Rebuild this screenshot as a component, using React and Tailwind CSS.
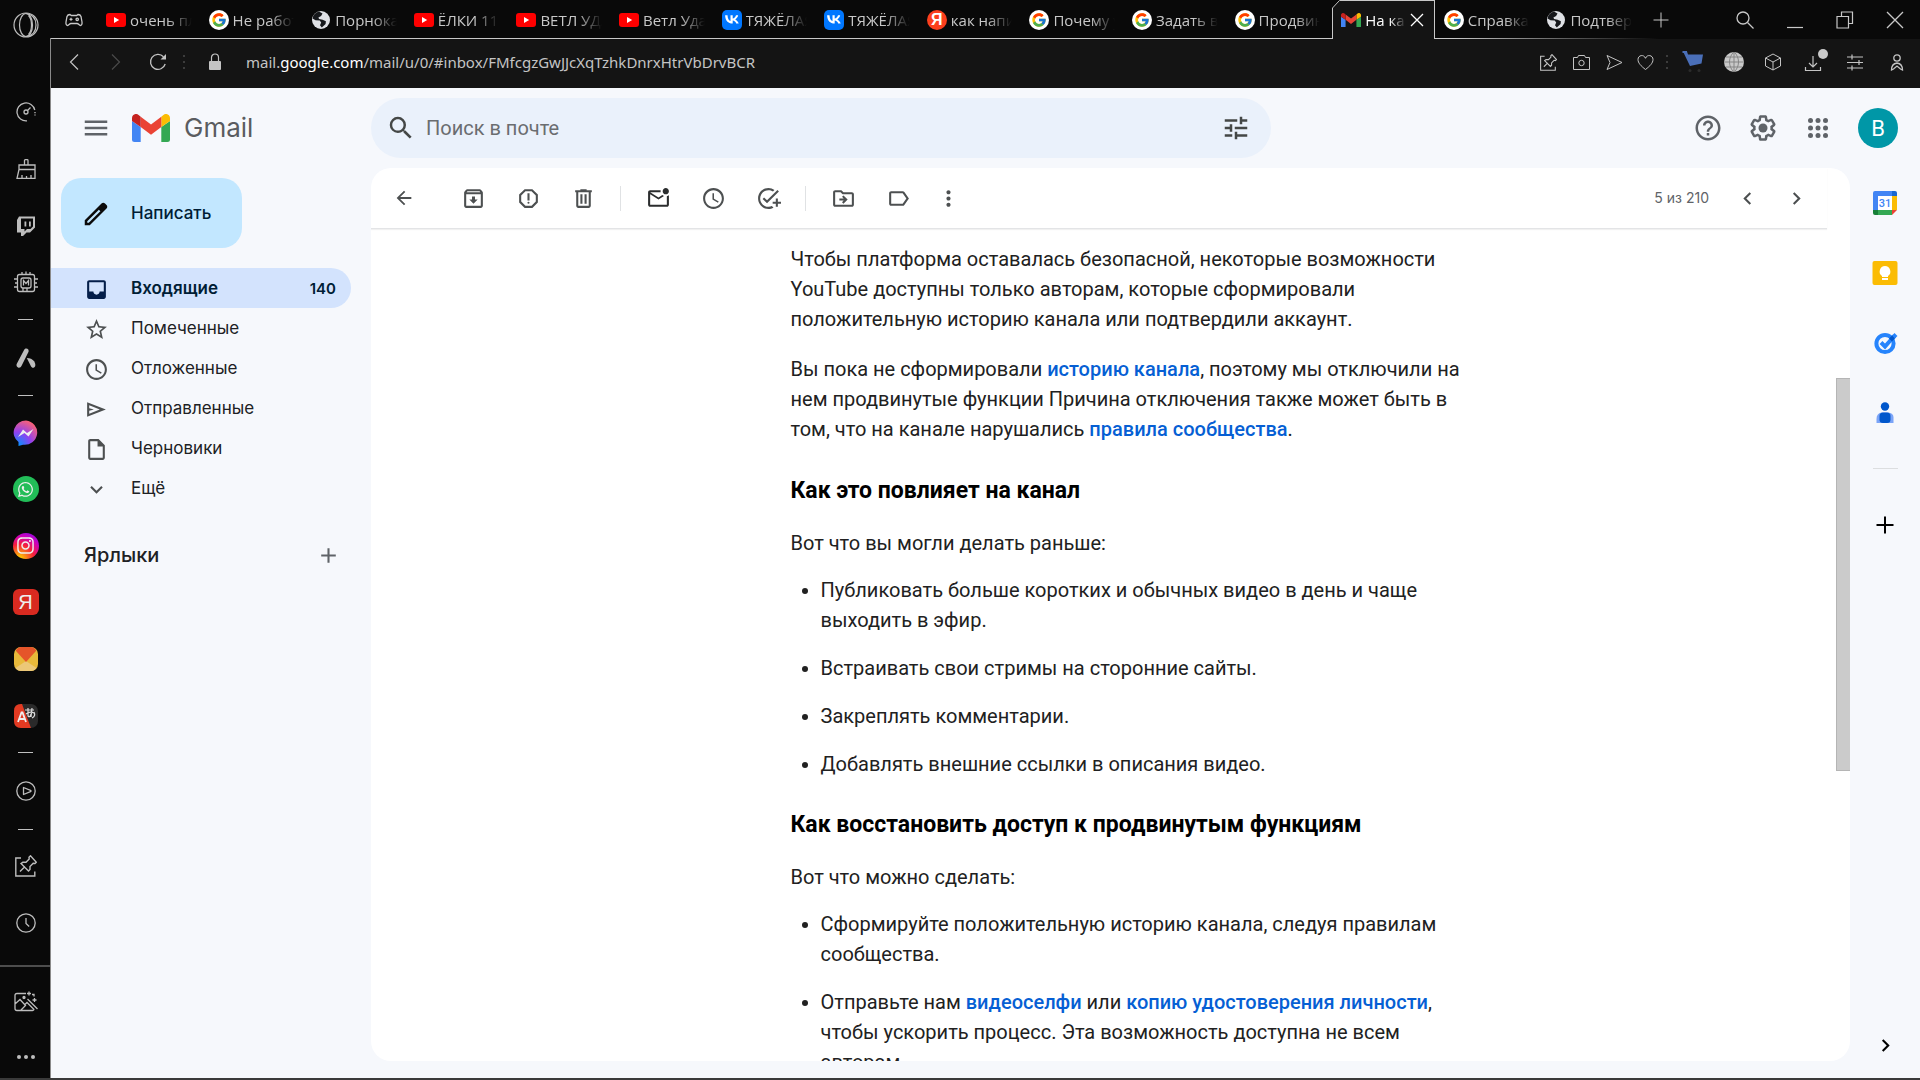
import React from "react";
import { FcGoogle } from "react-icons/fc";
import { FaWhatsapp, FaInstagram } from "react-icons/fa";
import {
  MdMenu, MdSearch, MdTune, MdHelpOutline, MdArrowBack, MdOutlineArchive,
  MdOutlineReport, MdOutlineMarkEmailUnread, MdAccessTime, MdOutlineAddTask,
  MdOutlineDriveFileMove, MdLabelOutline, MdMoreVert, MdChevronLeft, MdChevronRight,
  MdStarBorder, MdOutlineInsertDriveFile, MdExpandMore, MdAdd,
} from "react-icons/md";

/* ---------- thin line icons of the browser frame ---------- */

function Line({ size = 20, box = 20, width = 1, className = "", children }) {
  return (
    <svg width={size} height={size} viewBox={`0 0 ${box} ${box}`} fill="none" stroke="currentColor"
      strokeWidth={width} className={`shrink-0 ${className}`} aria-hidden="true">
      {children}
    </svg>
  );
}

const OperaIcon = () => (
  <Line size={26} box={26} width={1.2}>
    <circle cx="13" cy="13" r="12" />
    <ellipse cx="13" cy="13" rx="6.5" ry="11.5" />
    <path d="M13 1.500c7 1 10 5.500 10 11.500s-3 10.500-10 11.500M15.500 3.500c4 4 4 15 0 19" />
  </Line>
);
const GamepadIcon = () => (
  <Line size={18} box={18} width={1.3}>
    <path d="M5 3.500 6.300 4.500h5.400L13 3.500c1.500 0 2.500.5 3 2l1 5.500c.3 2-.4 3.500-1.600 3.500-1.300 0-1.800-2-3.400-2H6c-1.600 0-2.100 2-3.400 2C1.400 14.500.7 13 1 11l1-5.500c.5-1.500 1.500-2 3-2z" />
    <path d="M6 6.800v3M4.500 8.300h3" />
    <circle cx="12.200" cy="8.300" r="1.200" />
  </Line>
);
const GaugeIcon = () => (
  <Line width={1.3}>
    <path d="M11 18.900A9 9 0 1 1 18.800 8" />
    <path d="M19 10v4" strokeDasharray="1.200 1.200" />
    <circle cx="10" cy="10" r="2" />
    <path d="m11.500 8.500 3-3" />
  </Line>
);
const BrushIcon = () => (
  <Line width={1.3}>
    <path d="M8.500 6V1.500q0-.8.800-.8h1.900q.8 0 .8.800V6M3 10.500V6h16v4.500M3 10.500h16M3 10.500 1 19.400h18V10.500M6 19v-3M10.500 19v-2M15 19v-3" />
  </Line>
);
const TwitchIcon = () => (
  <svg width="20" height="20" viewBox="0 0 20 20" fill="currentColor" aria-hidden="true">
    <path fillRule="evenodd" d="M3 .5h16v11L14 16.500h-3.500L7 20H5v-3.500H1V4zM5 2.500v10.500h3.500v2.500l2.500-2.500h3.500l2.500-2.500v-8zM8.500 5.500h1.800v5H8.500zM13 5.500h1.800v5H13z" />
  </svg>
);
const ChipIcon = () => (
  <Line size={24} box={24} width={1.3}>
    <rect x="3.500" y="3.500" width="17" height="17" rx="2" />
    <rect x="7" y="7" width="10" height="10" rx="2" />
    <path d="M9.500 14.500v-5l2.500 3 2.500-3v5M8 3V1M12 3V.5M16 3V1M9 17v3M13 17v3M0 8h3M1 12h2M0 16h3M21 8h3M21 12h2M21 16h3" />
  </Line>
);
const AvastIcon = () => (
  <svg width="20" height="20" viewBox="0 0 20 20" fill="currentColor" aria-hidden="true">
    <path d="M8.200 1.700C9 .1 11.400 0 12.300 1.600c.5 1 .4 1.800 0 2.700L5.600 17.800C4.900 19.300 3.600 20.200 2.100 19.600.6 18.900.1 17.300.8 15.700z" />
    <path d="M10.800 10c3 .2 5.700 1 7.500 3.400 1.400 2 1.500 5.300-.3 6.200-1.500.6-2.500-.4-3.200-1.600z" />
  </svg>
);
const PlayIcon = () => (
  <Line width={1.300}>
    <circle cx="10" cy="10" r="9.200" />
    <path d="M7.500 6.500v7l7-2.800q1-.7 0-1.400z" strokeLinejoin="round" />
  </Line>
);
const PinIcon = ({ size = 22 }) => (
  <Line size={size} box={22} width={1.400}>
    <path d="M6 3H.8v18h19v-4.500M5 16.500l5-5M6 8.500l7.500 7.500 1.500-1.500v-3l3.200-3.300 1.800.3 1.300-1.300L15.500.8 14 2.300l.2 1.800L11 7.300H7.800z" />
  </Line>
);
const ClockIcon = () => (
  <Line width={1.300}>
    <circle cx="10" cy="10" r="9.200" />
    <path d="M10 5v5.500l3.200 3" />
  </Line>
);
const MagicImageIcon = () => (
  <Line size={24} box={24} width={1.300}>
    <path d="M12 3.500H3Q1 3.500 1 5.500v13q0 2 2 2h15.500q1.500 0 1.500-1.500M1 14l5-4.500 5.500 6L7 20M10.500 15l2.500-2.500 7 7M13.500 9l10 10M15 1.500v4M13 3.500h4M20.500 8v4M18.500 10h4M18 4.500h2v2" />
    <circle cx="10" cy="7.500" r="1" fill="currentColor" />
  </Line>
);

/* ---------- small brand marks ---------- */

const YoutubeMark = () => (
  <svg width="20" height="20" viewBox="0 0 20 20" aria-hidden="true" className="shrink-0">
    <rect y="3" width="20" height="14" rx="3" fill="#f00" />
    <path d="M8 7v6l5.200-3z" fill="#fff" />
  </svg>
);
const GoogleMark = () => (
  <span className="flex size-5 shrink-0 items-center justify-center rounded-full bg-white"><FcGoogle size={16} /></span>
);
const GlobeMark = () => (
  <svg width="20" height="20" viewBox="0 0 20 20" aria-hidden="true" className="shrink-0">
    <circle cx="10" cy="10" r="9" fill="#dfe1e5" />
    <path d="M8 1.500C4.500 2.500 2 5 1.600 8.500l2.900 1.800 4.200.3 1.500 2-1.200 2.600 1.800 2.300 3.800-3.600.3-2.700-3.300-1.500-3.500-.6-.7-1.700 2.700-1.300 1.400-2.600z" fill="#16181b" />
  </svg>
);
const VkMark = () => (
  <span className="flex size-5 shrink-0 items-center justify-center overflow-hidden rounded-[5px] bg-[#0077ff] text-white">
    <svg width="14" height="9" viewBox="0 0 14 9" aria-hidden="true">
      <path fill="currentColor" d="M7.700 8.600C3 8.600.2 5.400.1.200h2.400c.1 3.800 1.700 5.400 3 5.700V.2h2.200v3.300C9.100 3.300 10.500 1.800 11 .2h2.200c-.4 2-1.900 3.500-3 4.200 1.100.5 2.800 1.800 3.500 4.200h-2.500c-.5-1.600-1.800-2.900-3.500-3v3z" />
    </svg>
  </span>
);
const YandexMark = () => (
  <span className="flex size-5 shrink-0 items-center justify-center rounded-full bg-[#fc3f1d] font-['Liberation_Sans',sans-serif] text-base leading-5 font-bold text-white">Я</span>
);
const GmailMark = ({ className }) => (
  <svg viewBox="0 0 38 28" className={`shrink-0 ${className}`} aria-hidden="true">
    <path d="M0 7v18.500Q0 28 2.600 28H8.700V13z" fill="#4285f4" />
    <path d="M29.300 13v15h6.100Q38 28 38 25.500V7z" fill="#34a853" />
    <path d="M29.300 2.800V13L38 7V4c0-3.500-4-5.300-6.600-3z" fill="#fbbc04" />
    <path d="M8.700 13V2.800L19 10.500l10.300-7.700V13L19 20.700z" fill="#ea4335" />
    <path d="M0 4v3l8.700 6V2.800L6.600 1C4-1.300 0 .5 0 4z" fill="#c5221f" />
  </svg>
);

const tabs = [
  { icon: YoutubeMark, text: "очень пл" },
  { icon: GoogleMark, text: "Не работ" },
  { icon: GlobeMark, text: "Порнока" },
  { icon: YoutubeMark, text: "ЁЛКИ 11" },
  { icon: YoutubeMark, text: "ВЕТЛ УДА" },
  { icon: YoutubeMark, text: "Ветл Уда" },
  { icon: VkMark, text: "ТЯЖЁЛАЯ" },
  { icon: VkMark, text: "ТЯЖЁЛАЯ" },
  { icon: YandexMark, text: "как напи" },
  { icon: GoogleMark, text: "Почему у" },
  { icon: GoogleMark, text: "Задать во" },
  { icon: GoogleMark, text: "Продвин" },
  { icon: null, text: "На ка" },
  { icon: GoogleMark, text: "Справка", last: true },
  { icon: GlobeMark, text: "Подтверж", last: true },
];

const label = "min-w-0 flex-1 overflow-hidden whitespace-nowrap text-[15px] leading-6 [mask-image:linear-gradient(to_right,black_60%,transparent)]";

function TabStrip() {
  return (
    <div className="relative flex h-[39px] shrink-0 text-[#c8c8c8]">
      <div className="absolute inset-x-0 bottom-0 h-px bg-[linear-gradient(to_right,#c8c8c8_75%,transparent_86%)]" />
      <button aria-label="GX" className="flex w-[50px] shrink-0 items-center justify-center pr-1"><GamepadIcon /></button>
      <div role="tablist" className="grid min-w-0 flex-1 grid-cols-[repeat(15,minmax(0,1fr))]">
        {tabs.map((t, i) =>
          t.icon ? (
            <button key={i} role="tab" className={`flex min-w-0 items-center gap-1 text-left ${t.last ? "pr-2 pl-[9px]" : "pr-3 pl-[5px]"}`}>
              <t.icon />
              <span className={label}>{t.text}</span>
            </button>
          ) : (
            <div key={i} role="tab" aria-selected="true" className="relative flex min-w-0 items-center gap-1 border-x border-t border-[#c8c8c8] bg-[#141414] pl-2 text-white">
              <svg width="9" height="10" className="absolute -top-px -left-px" aria-hidden="true">
                <path d="M0 0h9L0 10z" fill="#090909" />
                <path d="M.5 10V8L7.500.5H9" stroke="#c8c8c8" fill="none" />
              </svg>
              <GmailMark className="w-5" />
              <span className={label}>{t.text}</span>
              <button aria-label="Закрыть вкладку" className="mr-2.5"><Line size={14} box={14} width={1.300}><path d="m1 1 12 12M13 1 1 13" /></Line></button>
            </div>
          )
        )}
      </div>
      <div className="flex w-[280px] shrink-0 items-center justify-between pr-4 pl-[13px]">
        <button aria-label="Новая вкладка"><Line size={16} box={16}><path d="M8 .5v15M.5 8h15" /></Line></button>
        <div className="flex items-center gap-8">
          <button aria-label="Поиск"><Line size={18} box={18} width={1.300}><circle cx="7" cy="7" r="6" /><path d="m11.500 11.500 6 6" /></Line></button>
          <button aria-label="Свернуть"><Line size={18} box={18} width={1.200}><path d="M1 16.500h16" /></Line></button>
          <button aria-label="Восстановить"><Line size={18} box={18} width={1.200}><path d="M5.500 5V1h11v11.500h-4M1 5.500h11.500V17H1z" /></Line></button>
          <button aria-label="Закрыть"><Line size={18} box={18} width={1.300}><path d="m1 1 16 16M17 1 1 17" /></Line></button>
        </div>
      </div>
    </div>
  );
}

const DotColumn = () => (
  <span className="flex flex-col gap-1">
    <i className="size-0.5 bg-[#3c3c3c]" /><i className="size-0.5 bg-[#3c3c3c]" /><i className="size-0.5 bg-[#3c3c3c]" />
  </span>
);

function AddressBar() {
  return (
    <div className="flex h-[49px] shrink-0 items-center bg-[#141414] pb-[3px] text-[#c4c4c4]">
      <div className="flex w-[195px] shrink-0 items-center pl-4">
        <button aria-label="Назад" className="mr-6"><Line size={16} box={16} width={1.200}><path d="M11 .5 3.500 8l7.500 7.500" /></Line></button>
        <button aria-label="Вперёд" disabled className="mr-[26px] text-[#4a4a4a]"><Line size={16} box={16} width={1.200}><path d="M5 .5 12.500 8 5 15.500" /></Line></button>
        <button aria-label="Обновить" className="mr-4"><Line size={18} box={18} width={1.300}><path d="M14.500 3.800A7.500 7.500 0 1 0 16.200 11" /><path d="M17 1v5.500h-5.500z" fill="currentColor" stroke="none" /></Line></button>
        <DotColumn />
        <svg width="14" height="18" viewBox="0 0 14 18" className="ml-[23px]" aria-hidden="true">
          <rect x="1" y="8" width="12" height="9" rx="1" fill="currentColor" />
          <path d="M3.500 8V4.500a3.500 3.500 0 0 1 7 0V8" fill="none" stroke="currentColor" strokeWidth="1.200" />
        </svg>
      </div>
      <p className="min-w-0 flex-1 truncate font-['Noto_Sans',sans-serif] text-[15px] leading-6">
        mail.<span className="text-white">google.com</span>/mail/u/0/#inbox/FMfcgzGwJJcXqTzhkDnrxHtrVbDrvBCR
      </p>
      <div className="flex shrink-0 items-center pr-3.5">
        <button aria-label="Закрепить" className="mr-4"><PinIcon size={17} /></button>
        <button aria-label="Снимок" className="mr-4"><Line size={17} box={17}><path d="M.5 3.500h4l1-2h6l1 2h4v12H.5z" /><circle cx="8.500" cy="9" r="2.700" /></Line></button>
        <button aria-label="Мой поток" className="mr-3.5"><Line size={17} box={17}><path d="m1 1.500 15 7-15 7 3-7z" /></Line></button>
        <button aria-label="Избранное" className="mr-3"><Line size={17} box={17}><path d="M8.500 15.500C4 12 1 9 1 5.500c0-4.500 6-5.500 7.500-1.200C10 0 16 1 16 5.500c0 3.500-3 6.500-7.500 10z" /></Line></button>
        <DotColumn />
        <button aria-label="Покупки" className="mr-5 ml-3.5">
          <svg width="22" height="22" viewBox="0 0 22 22" aria-hidden="true">
            <path d="M1 .500h4l1 3h15l-1.500 9L8 15z" fill="#4a6fb8" />
            <path d="M.5 1h4.500" stroke="#4a6fb8" strokeWidth="2" />
            <circle cx="8" cy="19.500" r="1.500" fill="#2b2b2b" /><circle cx="17" cy="19.500" r="1.500" fill="#2b2b2b" />
          </svg>
        </button>
        <button aria-label="Переводчик" className="mr-5">
          <svg width="20" height="20" viewBox="0 0 20 20" aria-hidden="true">
            <circle cx="10" cy="10" r="10" fill="#c9c9c9" />
            <path d="M10 0v20M0 10h20M2 5h16M2 15h16M10 0c-6 5-6 15 0 20M10 0c6 5 6 15 0 20" stroke="#858585" fill="none" />
          </svg>
        </button>
        <button aria-label="Расширения" className="mr-[22px]"><Line size={18} box={18}><path d="m9 1 7.500 4v8L9 17l-7.500-4V5zM1.500 5 9 9l7.500-4M9 9v8" /></Line></button>
        <button aria-label="Загрузки" className="relative mr-6">
          <Line size={18} box={18} width={1.200}><path d="M9 3v11M5 10l4 4 4-4M1.500 14v3.500h15V14" /></Line>
          <span className="absolute -top-1 -right-1.5 size-2.5 rounded-full bg-[#c9c9c9]" />
        </button>
        <button aria-label="Настройка" className="mr-6"><Line size={18} box={18} width={1.200}><path d="M1 4h16M1 9.500h16M1 15h16M6 1.500v5M13 7v5M6 12.500v5" /></Line></button>
        <button aria-label="Профиль"><Line size={18} box={18} width={1.300}><circle cx="9" cy="5" r="3.200" /><path d="M3.500 17c0-4 2-6.500 5.500-7 3.500.5 5.500 3 5.500 7l-2-1L9 13l-3.500 3z" /></Line></button>
      </div>
    </div>
  );
}

const Dash = ({ pad = "pt-[7px]" }) => (
  <div className={`flex h-[18px] shrink-0 ${pad}`}><span className="block h-px w-[15px] bg-[#c0c0c0]" /></div>
);
const Slot = ({ label, height = "h-[57px]", children }) => (
  <button aria-label={label} className={`flex w-full shrink-0 items-center justify-center pl-px ${height}`}>{children}</button>
);

function BrowserSidebar() {
  return (
    <nav aria-label="Боковая панель" className="flex w-[51px] shrink-0 flex-col items-center text-[#bdbdbd]">
      <div className="flex h-[38px] w-full shrink-0 items-end justify-center"><OperaIcon /></div>
      <div className="flex min-h-0 w-full flex-1 flex-col items-center overflow-hidden border-r border-[#8a8a8a] pt-[46px]">
        <Slot label="Ускорение" height="h-14"><GaugeIcon /></Slot>
        <Slot label="Очистка"><BrushIcon /></Slot>
        <Slot label="Twitch"><TwitchIcon /></Slot>
        <Slot label="Контроль"><ChipIcon /></Slot>
        <Dash pad="pt-2" />
        <Slot label="Aria"><AvastIcon /></Slot>
        <Dash pad="pt-[9px]" />
        <Slot label="Messenger">
          <svg width="26" height="26" viewBox="0 0 26 26" aria-hidden="true">
            <defs>
              <radialGradient id="msg" cx="0.2" cy="1" r="1.100">
                <stop offset="0" stopColor="#0095ff" /><stop offset=".5" stopColor="#9040f0" /><stop offset="1" stopColor="#ff6470" />
              </radialGradient>
            </defs>
            <path d="M13 .5a12.500 12 0 1 1-3 24.200L5.500 26V22A12.500 12 0 0 1 13 .5z" fill="url(#msg)" />
            <path d="m5 17 5-7.500 4 3.500 6.500-4-5 7.500-4-3.500z" fill="#eee" />
          </svg>
        </Slot>
        <Slot label="WhatsApp" height="h-14"><span className="flex size-[26px] items-center justify-center rounded-full bg-[#22bd58] text-[#eee]"><FaWhatsapp size={17} /></span></Slot>
        <Slot label="Instagram"><span className="flex size-[26px] items-center justify-center rounded-full bg-[radial-gradient(circle_at_25%_100%,#ffc800_5%,#f5203a_45%,#d000b8_70%,#6a10ff)] text-[#eee]"><FaInstagram size={19} /></span></Slot>
        <Slot label="Яндекс" height="h-14"><span className="flex size-[26px] items-center justify-center rounded-md bg-[#d82a20] font-['Liberation_Sans',sans-serif] text-xl leading-6 text-[#eee]">Я</span></Slot>
        <Slot label="Яндекс Почта">
          <svg width="24" height="24" viewBox="0 0 24 24" aria-hidden="true">
            <rect width="24" height="24" rx="7" fill="#e8b93a" />
            <path d="M1.500 21 12 14l10.500 7q-2 3-5.500 3H7q-3.500 0-5.500-3z" fill="#ecc878" />
            <path d="M2 3Q4 0 7 0h10q3 0 5 3v1L12 15 2 4z" fill="#e5552a" />
          </svg>
        </Slot>
        <Slot label="Яндекс Переводчик">
          <svg width="24" height="24" viewBox="0 0 24 24" aria-hidden="true">
            <rect width="24" height="24" rx="7" fill="#2a2a2a" />
            <path d="M7 0h1l9 24H7q-7 0-7-7V7q0-7 7-7z" fill="#e23a22" />
            <path d="m4 18 3.500-9.500h1L12 18M5.300 15h5.500" stroke="#eee" strokeWidth="1.800" fill="none" />
            <path d="M11 6h9M14 4v8q2 2 3-2M18 4l-1 9M20 8q2 4-2 6M12 10q4-3 8-1" stroke="#ddd" strokeWidth="1.200" fill="none" />
          </svg>
        </Slot>
        <Dash pad="pt-2" />
        <Slot label="Плеер"><PlayIcon /></Slot>
        <Dash pad="pt-2.5" />
        <Slot label="Пинборды"><PinIcon /></Slot>
        <Slot label="История"><ClockIcon /></Slot>
        <div className="mt-auto flex w-full shrink-0 flex-col border-t-2 border-[#4d4d4d] pt-1.5">
          <Slot label="Обои"><MagicImageIcon /></Slot>
          <Slot label="Ещё" height="h-12 pt-1.5"><span className="flex gap-[3px]"><i className="size-1 rounded-full bg-current" /><i className="size-1 rounded-full bg-current" /><i className="size-1 rounded-full bg-current" /></span></Slot>
        </div>
      </div>
    </nav>
  );
}

/* ---------- mail ---------- */

const ui = "font-['Inter','Noto_Sans',sans-serif]";

const Glyph = ({ size = 25, className = "", children }) => (
  <svg width={size} height={size} viewBox="0 0 24 24" fill="currentColor" className={`shrink-0 ${className}`} aria-hidden="true">{children}</svg>
);
const InboxIcon = (p) => (
  <Glyph {...p}><path fillRule="evenodd" d="M5 3h14c1.100 0 2 .9 2 2v14c0 1.100-.9 2-2 2H5c-1.100 0-2-.9-2-2V5c0-1.100.9-2 2-2zm0 2v9h4c0 1.600 1.300 3 3 3s3-1.400 3-3h4V5z" /></Glyph>
);
const SendIcon = (p) => (
  <Glyph {...p}><path fillRule="evenodd" d="M3 5v14l18-7zm2 3 10.200 4L5 16v-2.800L9.500 12 5 10.800z" /></Glyph>
);
const PencilIcon = (p) => (
  <Glyph {...p}><path fillRule="evenodd" d="M20.400 4.800 19.200 3.600c-.8-.8-2-.8-2.800 0L3 17v4h4L20.400 7.600c.8-.8.8-2 0-2.800zM6.200 19H5v-1.200L14.300 8.500l1.200 1.200z" /></Glyph>
);
const TrashIcon = () => (
  <Glyph><path fillRule="evenodd" d="M15 4V3H9v1H4v2h1v13c0 1.100.9 2 2 2h10c1.100 0 2-.9 2-2V6h1V4zm2 15H7V6h10zM9 8h2v9H9zm4 0h2v9h-2z" /></Glyph>
);

const folders = [
  [MdStarBorder, "Помеченные"],
  [MdAccessTime, "Отложенные"],
  [SendIcon, "Отправленные"],
  [MdOutlineInsertDriveFile, "Черновики"],
  [MdExpandMore, "Ещё"],
];

function MailHeader() {
  return (
    <header className="flex h-20 shrink-0 items-center pr-[22px] text-[#5f6368]">
      <div className="flex w-80 shrink-0 items-center">
        <button aria-label="Главное меню" className="ml-[30px]"><MdMenu size={30} /></button>
        <a href="#inbox" className="ml-[21px] flex items-center gap-3.5">
          <GmailMark className="w-[38px]" />
          <span className="font-['Inter',sans-serif] text-[26px] leading-8 text-[#5a5c60]">Gmail</span>
        </a>
      </div>
      <form role="search" className="flex h-[60px] max-w-[900px] flex-1 items-center rounded-full bg-[#eaf1fb] pr-5 pl-[15px] text-[#444746]">
        <MdSearch size={30} className="shrink-0" />
        <input aria-label="Поиск в почте" placeholder="Поиск в почте" className="ml-2.5 min-w-0 flex-1 bg-transparent font-['Roboto',sans-serif] text-xl outline-none placeholder:text-[#6a6d70]" />
        <button type="button" aria-label="Параметры поиска"><MdTune size={30} /></button>
      </form>
      <div className="ml-auto flex shrink-0 items-center gap-[25px]">
        <button aria-label="Поддержка"><MdHelpOutline size={30} /></button>
        <button aria-label="Настройки">
          <Glyph size={30}>
            <circle cx="12" cy="12" r="3.600" />
            <path d="M13.850 22.250h-3.700c-.740 0-1.360-.540-1.450-1.270l-.270-1.890c-.270-.140-.530-.290-.790-.460l-1.800.720c-.700.260-1.470-.030-1.810-.650L2.200 15.530c-.350-.660-.200-1.440.360-1.880l1.530-1.190c-.010-.150-.020-.300-.020-.460 0-.150.010-.310.020-.460l-1.520-1.190c-.590-.450-.740-1.260-.370-1.880l1.850-3.190c.340-.620 1.110-.900 1.790-.630l1.810.730c.260-.170.520-.320.780-.460l.270-1.910c.090-.700.710-1.250 1.440-1.250h3.700c.740 0 1.360.540 1.450 1.270l.270 1.890c.270.140.530.290.790.460l1.800-.720c.710-.260 1.480.030 1.820.650l1.840 3.180c.360.660.200 1.440-.360 1.880l-1.520 1.190c.010.150.020.300.020.460s-.010.310-.020.460l1.520 1.190c.560.450.720 1.230.370 1.860l-1.860 3.220c-.340.620-1.110.900-1.800.630l-1.800-.720c-.260.170-.520.320-.780.460l-.270 1.910c-.1.680-.720 1.220-1.460 1.220zm-3.230-2h2.760l.370-2.550.530-.22c.440-.180.880-.440 1.340-.780l.450-.340 2.380.960 1.380-2.400-2.030-1.580.070-.560c.030-.260.060-.510.060-.780s-.030-.530-.060-.780l-.070-.560 2.030-1.580-1.390-2.400-2.390.960-.450-.350c-.420-.320-.870-.580-1.330-.770l-.520-.220-.370-2.550h-2.760l-.370 2.550-.530.210c-.44.190-.88.440-1.340.790l-.45.330-2.380-.95-1.390 2.390 2.030 1.580-.07.560a7 7 0 0 0-.06.790c0 .26.020.530.060.780l.07.560-2.030 1.580 1.380 2.400 2.390-.96.450.35c.43.33.86.580 1.330.77l.53.220z" />
          </Glyph>
        </button>
        <button aria-label="Приложения Google">
          <Glyph size={30}>
            {[6, 12, 18].map((y) => [6, 12, 18].map((x) => <circle key={`${x}-${y}`} cx={x} cy={y} r="2" />))}
          </Glyph>
        </button>
        <button aria-label="Аккаунт" className="flex size-10 items-center justify-center rounded-full bg-[#0097a7] font-['Roboto',sans-serif] text-[22px] text-white">B</button>
      </div>
    </header>
  );
}

function FolderPane() {
  return (
    <aside className={`w-80 shrink-0 pt-2.5 pr-5 text-[#202124] ${ui}`}>
      <button className="ml-2.5 flex h-[70px] w-[181px] items-center gap-5 rounded-[20px] bg-[#c2e7ff] pt-0.5 pl-5 text-[17px] font-medium text-[#001d35]">
        <PencilIcon size={30} className="text-[#0b0b0b]" />Написать
      </button>
      <nav aria-label="Папки" className="mt-5">
        <a href="#inbox" className="flex h-10 items-center rounded-r-full bg-[#d3e3fd] pt-0.5 pr-[15px] pl-[33px] text-[17px] font-semibold text-[#001d35]">
          <InboxIcon className="mr-[22px] text-[#041e49]" />
          <span className="flex-1">Входящие</span>
          <span className="text-[15px]">140</span>
        </a>
        {folders.map(([Icon, name]) => (
          <a key={name} href={`#${name}`} className="flex h-10 items-center pt-0.5 pl-[33px] text-[17px]">
            <Icon size={25} className="mr-[22px] text-[#4d5051]" />{name}
          </a>
        ))}
      </nav>
      <div className="mt-8 flex h-[30px] items-center justify-between pr-2.5 pl-[33px]">
        <h2 className="text-xl font-medium">Ярлыки</h2>
        <button aria-label="Создать ярлык" className="text-[#5f6368]"><MdAdd size={25} /></button>
      </div>
    </aside>
  );
}

const Tool = ({ label, children, className = "w-[55px]" }) => (
  <button aria-label={label} className={`flex h-10 shrink-0 items-center justify-center ${className}`}>{children}</button>
);
const Sep = () => <span className="mr-2.5 ml-[9px] h-[25px] w-px shrink-0 bg-[#e0e2e4]" />;

function Toolbar() {
  return (
    <div className="mr-[23px] flex h-[61px] shrink-0 items-center border-b border-[#e3e4e6] pr-1.5 pl-[5px] text-[#4d5051] shadow-[0_1px_1px_#f1f1f1]">
      <Tool label="Назад"><MdArrowBack size={22} /></Tool>
      <Tool label="Архивировать" className="ml-[15px] w-[55px]"><MdOutlineArchive size={25} /></Tool>
      <Tool label="В спам"><MdOutlineReport size={25} /></Tool>
      <Tool label="Удалить"><TrashIcon /></Tool>
      <Sep />
      <Tool label="Отметить как непрочитанное"><MdOutlineMarkEmailUnread size={25} className="text-[#2b2d2e]" /></Tool>
      <Tool label="Отложить"><MdAccessTime size={25} /></Tool>
      <Tool label="Добавить в задачи"><MdOutlineAddTask size={25} /></Tool>
      <Sep />
      <Tool label="Переместить"><MdOutlineDriveFileMove size={25} /></Tool>
      <Tool label="Ярлыки"><MdLabelOutline size={25} /></Tool>
      <Tool label="Ещё" className="mr-auto w-[45px]"><MdMoreVert size={25} /></Tool>
      <span className={`mr-3.5 text-sm text-[#5f6368] ${ui}`}>5 из 210</span>
      <Tool label="Предыдущее" className="w-[49px]"><MdChevronLeft size={25} /></Tool>
      <Tool label="Следующее" className="w-[49px]"><MdChevronRight size={25} /></Tool>
    </div>
  );
}

const L = ({ children }) => <a href="#help" className="font-medium text-[#065fd4]">{children}</a>;
const list = "mt-[17px] flex list-disc flex-col gap-[18px] pl-[30px]";
const heading = "text-[23px] leading-[30px] font-bold text-black";

function Message() {
  return (
    <div className="flex min-h-0 flex-1">
      <div className="min-w-0 flex-1 overflow-hidden pl-14">
        <article className="mx-auto max-w-[682px] pt-[15px] font-['Roboto',sans-serif] text-xl leading-[30px] text-[#212121]">
          <p>Чтобы платформа оставалась безопасной, некоторые возможности YouTube доступны только авторам, которые сформировали положительную историю канала или подтвердили аккаунт.</p>
          <p className="mt-5">Вы пока не сформировали <L>историю канала</L>, поэтому мы отключили на нем продвинутые функции Причина отключения также может быть в том, что на канале нарушались <L>правила сообщества</L>.</p>
          <h3 className={`mt-8 ${heading}`}>Как это повлияет на канал</h3>
          <p className="mt-[22px]">Вот что вы могли делать раньше:</p>
          <ul className={list}>
            <li>Публиковать больше коротких и обычных видео в день и чаще выходить в эфир.</li>
            <li>Встраивать свои стримы на сторонние сайты.</li>
            <li>Закреплять комментарии.</li>
            <li>Добавлять внешние ссылки в описания видео.</li>
          </ul>
          <h3 className={`mt-[31px] ${heading}`}>Как восстановить доступ к продвинутым функциям</h3>
          <p className="mt-[22px]">Вот что можно сделать:</p>
          <ul className={list}>
            <li>Сформируйте положительную историю канала, следуя правилам сообщества.</li>
            <li>Отправьте нам <L>видеоселфи</L> или <L>копию удостоверения личности</L>, чтобы ускорить процесс. Эта возможность доступна не всем авторам.</li>
          </ul>
        </article>
      </div>
      <div className="flex w-3.5 shrink-0 flex-col" aria-hidden="true">
        <div className="flex-[149]" />
        <div className="flex-[392] border border-r-0 border-[#b5b5b5] bg-[#cbcbcb]" />
        <div className="flex-[290]" />
      </div>
    </div>
  );
}

function SidePanel() {
  return (
    <aside aria-label="Боковая панель приложений" className="flex w-[70px] shrink-0 flex-col items-center pt-[22px]">
      <button aria-label="Календарь">
        <svg width="26" height="26" viewBox="0 0 26 26" aria-hidden="true">
          <path d="M3 1h18v5H6v15H1V3q0-2 2-2z" fill="#4285f4" />
          <path d="M20 1h3q2 0 2 2v3h-5z" fill="#1967d2" />
          <path d="M20 6h5v14h-5z" fill="#fbbc04" />
          <path d="M20 20h5l-5 5z" fill="#ea4335" />
          <path d="M6 20h14v5H6z" fill="#34a853" />
          <path d="M1 20h5v5H3q-2 0-2-2z" fill="#188038" />
          <path d="M6 6h14v14H6z" fill="#fff" />
          <text x="13" y="17" textAnchor="middle" fontSize="11" fontWeight="500" fontFamily="Roboto, sans-serif" fill="#4285f4">31</text>
        </svg>
      </button>
      <button aria-label="Keep" className="mt-11">
        <svg width="26" height="26" viewBox="0 0 26 26" aria-hidden="true">
          <rect x=".5" y="1" width="25" height="24" rx="2" fill="#fbbc04" />
          <path d="M13 6a5.500 5.500 0 0 1 3 10v1h-6v-1a5.500 5.500 0 0 1 3-10zM10 18h6v2h-6z" fill="#fff" />
        </svg>
      </button>
      <button aria-label="Задачи" className="mt-11">
        <svg width="26" height="26" viewBox="0 0 26 26" fill="none" aria-hidden="true">
          <circle cx="13" cy="13.500" r="8.600" stroke="#2684fc" strokeWidth="4" />
          <path d="m9 12.500 4 4 7.500-8.500" stroke="#2684fc" strokeWidth="4" />
          <path d="m18.500 10 4-4" stroke="#0057cc" strokeWidth="4" />
          <path d="m21.500 7 2.500-2.500" stroke="#2684fc" strokeWidth="4" />
        </svg>
      </button>
      <button aria-label="Контакты" className="mt-11">
        <svg width="26" height="26" viewBox="0 0 26 26" aria-hidden="true">
          <circle cx="13" cy="6.500" r="4.200" fill="#0057cc" />
          <path d="M10 12.500h6q5.500.5 5.500 5v5.500h-17v-4q0-6 5.500-6.500z" fill="#7ba4f7" />
          <rect x="7.500" y="12.500" width="11" height="10.500" rx="3.500" fill="#0057cc" />
        </svg>
      </button>
      <span className="mt-[42px] h-px w-[25px] shrink-0 bg-[#dcdee0]" />
      <button aria-label="Установить дополнения" className="mt-[43px]"><Line size={26} box={26} width={2} className="text-black"><path d="M13 4.500v17M4.500 13h17" /></Line></button>
      <button aria-label="Скрыть панель" className="mt-auto mb-[3px]"><MdChevronRight size={25} /></button>
    </aside>
  );
}

export default function App() {
  return (
    <div className="flex h-screen flex-col overflow-hidden bg-[#090909] font-['Open_Sans','Noto_Sans',sans-serif]">
      <div className="flex min-h-0 flex-1">
        <BrowserSidebar />
        <div className="flex min-w-0 flex-1 flex-col">
          <TabStrip />
          <AddressBar />
          <div className="flex min-h-0 flex-1 flex-col bg-[#f6f8fc]">
            <MailHeader />
            <div className="flex min-h-0 flex-1 pb-[17px]">
              <FolderPane />
              <main className="flex min-w-0 flex-1 flex-col overflow-hidden rounded-[20px] bg-white">
                <Toolbar />
                <Message />
              </main>
              <SidePanel />
            </div>
          </div>
        </div>
      </div>
      <div className="h-0.5 shrink-0 bg-[#3a3a3a]" />
    </div>
  );
}
